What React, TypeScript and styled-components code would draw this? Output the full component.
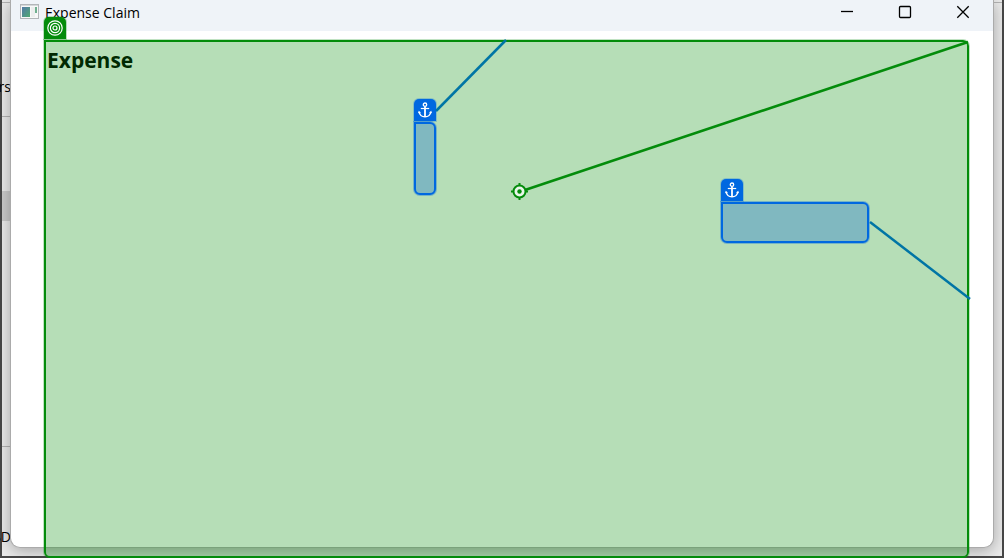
import React from "react";
import styled, { createGlobalStyle } from "styled-components";

const GREEN = "#048c0b";
const BLUE = "#0068e0";
const LINK = "#0075a5";

const GlobalStyle = createGlobalStyle`
  * { box-sizing: border-box; }
  body {
    margin: 0;
    background: #e9e9e9;
    font-family: "Open Sans", "Noto Sans", sans-serif;
    color: #000;
  }
`;

const Desktop = styled.div`
  position: relative;
  display: grid;
  grid-template-columns: 9px minmax(0, 1fr) 8px;
  min-height: 100vh;
  padding-bottom: 8px;
  border: 0 solid #484848;
  border-width: 0 2px 2px;
  background: #ebebeb;
`;

const Backdrop = styled.aside`
  display: flex;
  flex-direction: column;
  min-width: 0;
  font-size: 14px;
  line-height: 20px;
`;

const Section = styled.div<{ $height: number; $line?: boolean }>`
  display: flex;
  flex: none;
  flex-direction: column;
  justify-content: flex-end;
  align-items: flex-end;
  height: ${(p) => p.$height}px;
  border-bottom: ${(p) => (p.$line ? "1px solid #b4b4b4" : "0")};
`;

const Clipped = styled.span<{ $after: number }>`
  margin-bottom: ${(p) => p.$after}px;
`;

const Selected = styled.div`
  flex: none;
  height: 30px;
  background: #cbcbcb;
`;

const Window = styled.main`
  position: relative;
  display: flex;
  flex-direction: column;
  min-width: 0;
  margin-left: -1px;
  border: 1px solid #ababab;
  border-top: 0;
  border-radius: 0 0 10px 10px;
  background: #fff;
  box-shadow: 0 3px 16px rgba(0, 0, 0, 0.3);
  overflow: hidden;
`;

const TitleBar = styled.header`
  display: flex;
  flex: none;
  justify-content: space-between;
  height: 31px;
  padding: 0 1px 0 9px;
  background: #eff3f8;
`;

const Title = styled.div`
  display: flex;
  align-items: flex-start;
  gap: 6px;
  padding-top: 3px;
  font-size: 14px;
  line-height: 20px;
  white-space: nowrap;
`;

const Controls = styled.div`
  display: flex;
`;

const ControlButton = styled.button`
  display: flex;
  justify-content: center;
  width: 58px;
  height: 31px;
  padding: 4px 0 0;
  border: 0;
  background: none;
  color: #000;
`;

const Heading = styled.h1`
  margin: 0;
  padding: 14px 0 0 36px;
  font-size: 21px;
  line-height: 30px;
  font-weight: 700;
`;

const Overlay = styled.div`
  position: absolute;
  top: 40px;
  right: 33px;
  bottom: -2px;
  left: 42px;
  border: 2px solid ${GREEN};
  border-radius: 0 6px 6px 6px;
  background: rgba(3, 140, 8, 0.29);
  background-clip: padding-box;
  box-shadow: 0 0 0 1px rgba(5, 141, 12, 0.25);
`;

const Links = styled.svg`
  position: absolute;
  top: -2px;
  left: -2px;
  width: 100%;
  height: 100%;
  overflow: visible;
`;

const Badge = styled.div<{ $color: string }>`
  position: absolute;
  left: -2px;
  bottom: 100%;
  display: flex;
  align-items: center;
  justify-content: center;
  width: 22px;
  height: 22px;
  margin-bottom: 3px;
  border-radius: 5px 5px 0 0;
  background: ${(p) => p.$color};
  box-shadow: 0 0 0 1px ${(p) => p.$color}44;
`;

const AnchorBox = styled.div<{ $x: number; $y: number; $w: number; $h: number }>`
  position: absolute;
  left: ${(p) => p.$x}px;
  top: ${(p) => p.$y}px;
  width: ${(p) => p.$w}px;
  height: ${(p) => p.$h}px;
  border: 2px solid ${BLUE};
  border-radius: 0 6px 6px 6px;
  background: #80b8c0;
  box-shadow: 0 0 0 1px rgba(0, 104, 224, 0.35);
`;

const AppIcon = () => (
  <svg width="19" height="16" viewBox="0 0 19 16" aria-hidden="true">
    <defs>
      <linearGradient id="pane" x1="0" y1="0" x2="1" y2="1">
        <stop offset="0" stopColor="#5378a8" />
        <stop offset="1" stopColor="#50ab72" />
      </linearGradient>
    </defs>
    <rect x="0.5" y="1.5" width="18" height="14" fill="#f7f8f8" stroke="#b2b6b9" />
    <path d="M1 2.500H18" stroke="#d5d8da" />
    <rect x="2" y="4" width="8" height="10" fill="url(#pane)" />
    <rect x="11" y="4" width="4" height="10" fill="#eceeee" />
    <rect x="15" y="4" width="2" height="6" fill="#6fb08f" />
  </svg>
);

const TargetIcon = () => (
  <svg width="16" height="16" viewBox="0 0 16 16" fill="none" stroke="#fff" strokeWidth="1.200" aria-hidden="true">
    <circle cx="8" cy="8" r="7.200" />
    <circle cx="8" cy="8" r="4.600" />
    <circle cx="8" cy="8" r="2" />
  </svg>
);

const AnchorIcon = () => (
  <svg width="16" height="16" viewBox="0 0 16 16" fill="none" stroke="#fff" aria-hidden="true">
    <circle cx="8" cy="2.700" r="1.700" strokeWidth="1.300" />
    <path d="M8 4.400V15" strokeWidth="1.800" />
    <path d="M3.800 6.500H12.200" strokeWidth="1.200" />
    <path d="M2.200 10C2.700 13 5 14.800 8 14.800S13.300 13 13.800 10" strokeWidth="1.500" />
    <path d="M1.100 11.200L1.700 8.700L4 10.500ZM14.900 11.200L14.300 8.700L12 10.500Z" fill="#fff" stroke="none" />
  </svg>
);

const ControlIcon = ({ d }: { d: string }) => (
  <svg width="16" height="16" viewBox="0 0 16 16" fill="none" stroke="currentColor" strokeWidth="1.300" aria-hidden="true">
    <path d={d} />
  </svg>
);

const anchors = [
  { x: 368, y: 80, w: 22, h: 73 },
  { x: 675, y: 160, w: 148, h: 41 },
];

export default function App() {
  return (
    <>
      <GlobalStyle />
      <Desktop>
        <Backdrop>
          <Section $height={3} $line />
          <Section $height={114} $line>
            <Clipped $after={19}>rs</Clipped>
          </Section>
          <Section $height={74} />
          <Selected />
          <Section $height={226} $line />
          <Section $height={101}>
            <Clipped $after={1}>SD</Clipped>
          </Section>
        </Backdrop>
        <Window>
          <TitleBar>
            <Title>
              <AppIcon />
              <span>Expense Claim</span>
            </Title>
            <Controls>
              <ControlButton aria-label="Minimize">
                <ControlIcon d="M2 7.500H14" />
              </ControlButton>
              <ControlButton aria-label="Maximize">
                <ControlIcon d="M3.500 2.500H12.500Q13.500 2.500 13.500 3.500V12.500Q13.500 13.500 12.500 13.500H3.500Q2.500 13.500 2.500 12.500V3.500Q2.500 2.500 3.500 2.500Z" />
              </ControlButton>
              <ControlButton aria-label="Close">
                <ControlIcon d="M2.300 2.300L13.700 13.700M13.700 2.300L2.300 13.700" />
              </ControlButton>
            </Controls>
          </TitleBar>
          <Heading>Expense</Heading>
        </Window>
        <Backdrop>
          <Section $height={3} $line />
        </Backdrop>
        <Overlay>
          <Badge $color={GREEN}>
            <TargetIcon />
          </Badge>
          {anchors.map((a) => (
            <AnchorBox key={a.x} $x={a.x} $y={a.y} $w={a.w} $h={a.h}>
              <Badge $color={BLUE}>
                <AnchorIcon />
              </Badge>
            </AnchorBox>
          ))}
          <Links fill="none" strokeWidth="2.500" aria-hidden="true">
            <path d="M392 71L462 0" stroke={LINK} />
            <path d="M826 182L926 259" stroke={LINK} />
            <path d="M475 152L924 2" stroke={GREEN} />
            <circle cx="475.500" cy="151.500" r="6" fill="#e9f6ea" stroke={GREEN} strokeWidth="2" />
            <circle cx="475.500" cy="151.500" r="2.200" fill={GREEN} />
            <path d="M475.500 143V146M475.500 157V160M467 151.500H470M481 151.500H484" stroke={GREEN} strokeWidth="2" />
          </Links>
        </Overlay>
      </Desktop>
    </>
  );
}
